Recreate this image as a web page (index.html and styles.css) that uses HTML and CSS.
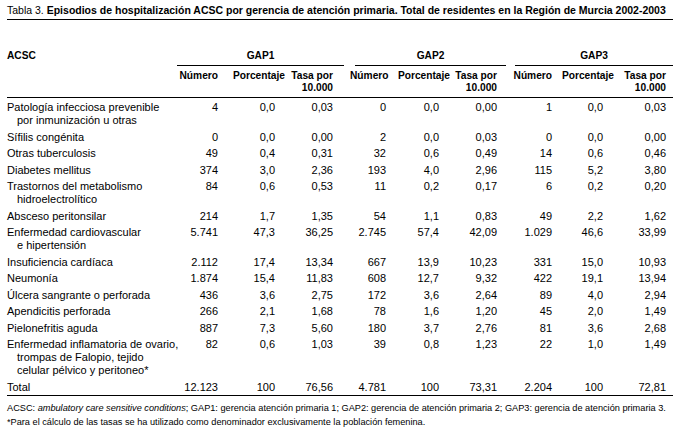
FILE: index.html
```html
<!DOCTYPE html>
<html lang="es">
<head>
<meta charset="utf-8">
<link rel="stylesheet" href="styles.css">
</head>
<body>
<div class="page">
  <div class="title"><span class="lbl">Tabla 3.</span> <b>Episodios de hospitalización ACSC por gerencia de atención primaria. Total de residentes en la Región de Murcia 2002-2003</b></div>
  <table class="t">
    <colgroup>
      <col class="c0"><col class="c1"><col class="c2"><col class="c3"><col class="c4"><col class="c5"><col class="c6"><col class="c7"><col class="c8"><col class="c9">
    </colgroup>
    <thead>
      <tr class="hr1">
        <th class="acsc">ACSC</th>
        <th colspan="3"><div class="gap g1">GAP1</div></th>
        <th colspan="3"><div class="gap g2">GAP2</div></th>
        <th colspan="3"><div class="gap g3">GAP3</div></th>
      </tr>
      <tr class="hr2">
        <th></th>
        <th class="n">Número</th><th class="p">Porcentaje</th><th class="r">Tasa por<br>10.000</th>
        <th class="n">Número</th><th class="p">Porcentaje</th><th class="r">Tasa por<br>10.000</th>
        <th class="n">Número</th><th class="p">Porcentaje</th><th class="r">Tasa por<br>10.000</th>
      </tr>
    </thead>
    <tbody>
      <tr><td class="lab">Patología infecciosa prevenible<br>por inmunización u otras</td><td class="n">4</td><td class="p">0,0</td><td class="r">0,03</td><td class="n">0</td><td class="p">0,0</td><td class="r">0,00</td><td class="n">1</td><td class="p">0,0</td><td class="r">0,03</td></tr>
      <tr><td class="lab">Sífilis congénita</td><td class="n">0</td><td class="p">0,0</td><td class="r">0,00</td><td class="n">2</td><td class="p">0,0</td><td class="r">0,03</td><td class="n">0</td><td class="p">0,0</td><td class="r">0,00</td></tr>
      <tr><td class="lab">Otras tuberculosis</td><td class="n">49</td><td class="p">0,4</td><td class="r">0,31</td><td class="n">32</td><td class="p">0,6</td><td class="r">0,49</td><td class="n">14</td><td class="p">0,6</td><td class="r">0,46</td></tr>
      <tr><td class="lab">Diabetes mellitus</td><td class="n">374</td><td class="p">3,0</td><td class="r">2,36</td><td class="n">193</td><td class="p">4,0</td><td class="r">2,96</td><td class="n">115</td><td class="p">5,2</td><td class="r">3,80</td></tr>
      <tr><td class="lab">Trastornos del metabolismo<br>hidroelectrolítico</td><td class="n">84</td><td class="p">0,6</td><td class="r">0,53</td><td class="n">11</td><td class="p">0,2</td><td class="r">0,17</td><td class="n">6</td><td class="p">0,2</td><td class="r">0,20</td></tr>
      <tr><td class="lab">Absceso peritonsilar</td><td class="n">214</td><td class="p">1,7</td><td class="r">1,35</td><td class="n">54</td><td class="p">1,1</td><td class="r">0,83</td><td class="n">49</td><td class="p">2,2</td><td class="r">1,62</td></tr>
      <tr><td class="lab">Enfermedad cardiovascular<br>e hipertensión</td><td class="n">5.741</td><td class="p">47,3</td><td class="r">36,25</td><td class="n">2.745</td><td class="p">57,4</td><td class="r">42,09</td><td class="n">1.029</td><td class="p">46,6</td><td class="r">33,99</td></tr>
      <tr><td class="lab">Insuficiencia cardíaca</td><td class="n">2.112</td><td class="p">17,4</td><td class="r">13,34</td><td class="n">667</td><td class="p">13,9</td><td class="r">10,23</td><td class="n">331</td><td class="p">15,0</td><td class="r">10,93</td></tr>
      <tr><td class="lab">Neumonía</td><td class="n">1.874</td><td class="p">15,4</td><td class="r">11,83</td><td class="n">608</td><td class="p">12,7</td><td class="r">9,32</td><td class="n">422</td><td class="p">19,1</td><td class="r">13,94</td></tr>
      <tr><td class="lab">Úlcera sangrante o perforada</td><td class="n">436</td><td class="p">3,6</td><td class="r">2,75</td><td class="n">172</td><td class="p">3,6</td><td class="r">2,64</td><td class="n">89</td><td class="p">4,0</td><td class="r">2,94</td></tr>
      <tr><td class="lab">Apendicitis perforada</td><td class="n">266</td><td class="p">2,1</td><td class="r">1,68</td><td class="n">78</td><td class="p">1,6</td><td class="r">1,20</td><td class="n">45</td><td class="p">2,0</td><td class="r">1,49</td></tr>
      <tr><td class="lab">Pielonefritis aguda</td><td class="n">887</td><td class="p">7,3</td><td class="r">5,60</td><td class="n">180</td><td class="p">3,7</td><td class="r">2,76</td><td class="n">81</td><td class="p">3,6</td><td class="r">2,68</td></tr>
      <tr><td class="lab">Enfermedad inflamatoria de ovario,<br>trompas de Falopio, tejido<br>celular pélvico y peritoneo*</td><td class="n">82</td><td class="p">0,6</td><td class="r">1,03</td><td class="n">39</td><td class="p">0,8</td><td class="r">1,23</td><td class="n">22</td><td class="p">1,0</td><td class="r">1,49</td></tr>
      <tr class="total"><td class="lab">Total</td><td class="n">12.123</td><td class="p">100</td><td class="r">76,56</td><td class="n">4.781</td><td class="p">100</td><td class="r">73,31</td><td class="n">2.204</td><td class="p">100</td><td class="r">72,81</td></tr>
    </tbody>
  </table>
  <div class="notes">
    <p>ACSC: <i>ambulatory care sensitive conditions</i>; GAP1: gerencia atención primaria 1; GAP2: gerencia de atención primaria 2; GAP3: gerencia de atención primaria 3.</p>
    <p>*Para el cálculo de las tasas se ha utilizado como denominador exclusivamente la población femenina.</p>
  </div>
</div>
</body>
</html>
```

FILE: styles.css
```css
html, body {
  margin: 0;
  padding: 0;
  background: #fff;
}
body {
  font-family: "Liberation Sans", Arial, sans-serif;
  color: #000;
}
.page {
  width: 666px;
  padding: 3px 7px 0 7px;
}
.title {
  font-size: 10.5px;
  line-height: 14px;
  padding-bottom: 2px;
  border-bottom: 1px solid #000;
  white-space: nowrap;
}
.title b {
  font-weight: bold;
}
.t {
  width: 666px;
  border-collapse: collapse;
  table-layout: fixed;
  margin-top: 29px;
  font-size: 11px;
  line-height: 13px;
}
.c0 { width: 170px; }
.c1 { width: 45px; }
.c2 { width: 66px; }
.c3 { width: 62px; }
.c4 { width: 40px; }
.c5 { width: 63px; }
.c6 { width: 59px; }
.c7 { width: 44px; }
.c8 { width: 61px; }
.c9 { width: 56px; }

th, td {
  padding: 0;
  vertical-align: top;
  white-space: nowrap;
}
th {
  font-weight: bold;
  font-size: 10.2px;
}
.hr1 th {
  padding: 0;
  text-align: center;
}
.hr1 th.acsc {
  text-align: left;
}
.gap {
  padding-bottom: 3px;
  border-bottom: 1px solid #000;
}
.g1 { margin: 0 6px 0 0; }
.g2 { margin: 0 6px 0 5px; }
.g3 { margin: 0 0 0 3px; }

.hr2 th {
  padding-top: 4px;
  padding-bottom: 3px;
  line-height: 12px;
  border-bottom: 1px solid #000;
  text-align: right;
}
tbody td {
  padding-top: 2px;
  padding-bottom: 1.5px;
  text-align: right;
}
td.lab {
  text-align: left;
  padding-left: 10px;
  text-indent: -10px;
}
tbody tr:first-child td {
  padding-top: 3px;
}
.hr2 th:nth-child(2), tbody td:nth-child(2) { padding-right: 4px; }
.hr2 th:nth-child(5), tbody td:nth-child(5) { padding-right: 4px; }
.hr2 th:nth-child(8), tbody td:nth-child(8) { padding-right: 4px; }
.hr2 th:nth-child(3) { padding-right: 3px; }
.hr2 th:nth-child(6) { padding-right: 3px; }
.hr2 th:nth-child(9) { padding-right: 3px; }
tbody td:nth-child(3) { padding-right: 13px; }
tbody td:nth-child(6) { padding-right: 14px; }
tbody td:nth-child(9) { padding-right: 14px; }
.hr2 th:nth-child(4), tbody td:nth-child(4) { padding-right: 17px; }
.hr2 th:nth-child(7), tbody td:nth-child(7) { padding-right: 15px; }
.hr2 th:nth-child(10), tbody td:nth-child(10) { padding-right: 7px; }

tr.total td {
  border-bottom: 1px solid #000;
}
.notes {
  font-size: 9.2px;
  line-height: 14px;
  padding: 5px 0 9px 0;
  border-bottom: 1px solid #000;
}
.notes p {
  margin: 0;
  white-space: nowrap;
}
```
